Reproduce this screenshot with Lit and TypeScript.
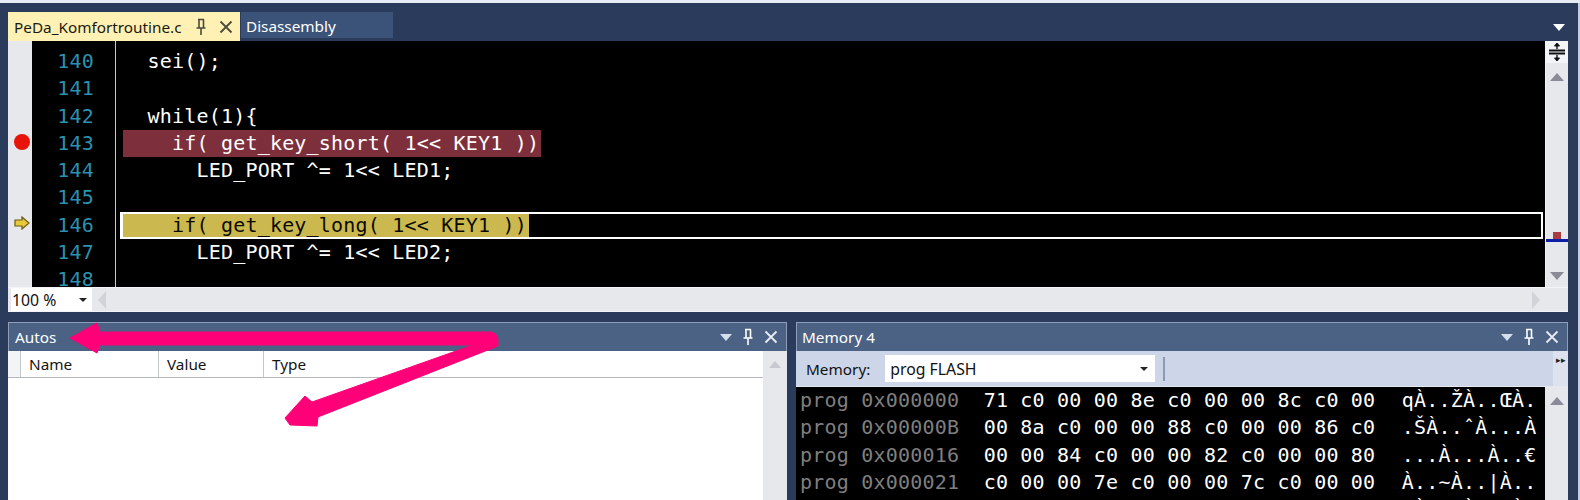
import { LitElement, html, css, svg } from "lit";
import { customElement } from "lit/decorators.js";

const pin = (c: string) => svg`<svg class="ic" width="12" height="18" viewBox="0 0 12 18" fill="none" stroke=${c} stroke-width="1.6"><path d="M3 1.5h6M4 1.5v8M8.5 1.5v8M1.5 10h9M6 10v7"/></svg>`;
const close = (c: string) => svg`<svg class="ic" width="14" height="14" viewBox="0 0 14 14" fill="none" stroke=${c} stroke-width="1.8"><path d="M1.5 1.5l11 11M12.5 1.5l-11 11"/></svg>`;
const drop = (c: string) => svg`<svg class="ic" width="12" height="7" viewBox="0 0 12 7"><path d="M0 0h12L6 7z" fill=${c}/></svg>`;
const dropSmall = svg`<svg class="ic" width="8" height="4" viewBox="0 0 8 4"><path d="M0 0h8L4 4z" fill="#222"/></svg>`;
const up = svg`<svg class="ic" width="14" height="8" viewBox="0 0 14 8"><path d="M7 0l7 8H0z" fill="#8a8a98"/></svg>`;
const upLight = svg`<svg class="ic" width="12" height="7" viewBox="0 0 12 7"><path d="M6 0l6 7H0z" fill="#c8c9d0"/></svg>`;
const down = svg`<svg class="ic" width="14" height="8" viewBox="0 0 14 8"><path d="M0 0h14L7 8z" fill="#8a8a98"/></svg>`;

interface Line { n: number; text: string; kind?: string; }
const lines: Line[] = [
  { n: 140, text: "  sei();" },
  { n: 141, text: "" },
  { n: 142, text: "  while(1){" },
  { n: 143, text: "    if( get_key_short( 1<< KEY1 ))", kind: "bp" },
  { n: 144, text: "      LED_PORT ^= 1<< LED1;" },
  { n: 145, text: "" },
  { n: 146, text: "    if( get_key_long( 1<< KEY1 ))", kind: "cur" },
  { n: 147, text: "      LED_PORT ^= 1<< LED2;" },
  { n: 148, text: "" },
];

const mem = [
  ["0x000000", "71 c0 00 00 8e c0 00 00 8c c0 00", "qÀ..ŽÀ..ŒÀ."],
  ["0x00000B", "00 8a c0 00 00 88 c0 00 00 86 c0", ".ŠÀ..ˆÀ...À"],
  ["0x000016", "00 00 84 c0 00 00 82 c0 00 00 80", "...À...À..€"],
  ["0x000021", "c0 00 00 7e c0 00 00 7c c0 00 00", "À..~À..|À.."],
  ["0x00002C", "7a c0 00 00 78 c0 00 00 76 c0 00", "zÀ..xÀ..vÀ."],
];

@customElement("app-root")
export class AppRoot extends LitElement {
  static styles = css`
    :host { display: block; width: 1580px; height: 500px; position: relative; overflow: hidden; background: #2a3b5b; font-family: "Noto Sans", sans-serif; font-size: 15.3px; }
    .ic { display: block; flex: none; }
    .strip { height: 3px; background: #e6ebf4; }
    .frame { height: 497px; display: flex; flex-direction: column; padding: 9px 10px 0 8px; box-sizing: border-box; border-right: 2px solid #c4cde0; }
    .tabs { height: 29px; display: flex; align-items: flex-start; flex: none; }
    .tab { display: flex; align-items: center; box-sizing: border-box; }
    .tab.active { width: 232px; height: 29px; background: #fff1b4; color: #1a1a10; padding: 1px 0 0 6px; }
    .tab.active .name { width: 181px; }
    .tab.active .x { margin-left: 12px; }
    .tab.other { width: 152px; height: 26px; margin-left: 1px; background: #3b5379; color: #fff; padding: 2px 0 0 5px; }
    .tabs .more { margin: 12px 3px 0 auto; }
    .editor { height: 246px; display: flex; flex: none; background: #000; }
    .margin { width: 24px; flex: none; background: #e7e8ec; padding: 5px 0 0 3px; box-sizing: border-box; }
    .mark { height: 27.3px; display: flex; align-items: center; justify-content: center; }
    .nums { width: 83px; flex: none; border-right: 1px solid #c9c9c9; overflow: hidden; padding-top: 7px; }
    .num { height: 27.3px; line-height: 27.3px; text-align: right; padding-right: 21px; color: #2b91af; }
    .mono { font-family: "DejaVu Sans Mono", monospace; font-size: 20px; letter-spacing: 0.2px; }
    .code { flex: 1; min-width: 0; padding: 7px 0 0 7px; overflow: hidden; color: #fff; }
    .line { height: 27.3px; line-height: 27.3px; box-sizing: border-box; display: flex; }
    .t { white-space: pre; }
    .line.bp .t { background: #7e2f3c; padding-right: 2px; }
    .line.cur { margin: 0 2px 0 -3px; border: 2px solid #fff; border-left-width: 3px; line-height: 23.3px; }
    .line.cur .t { background: #cbb94f; color: #0c0a00; padding-right: 2px; }
    .vs { width: 23px; flex: none; background: #e7e8ec; display: flex; flex-direction: column; align-items: center; position: relative; border-left: 1px solid #f4f4f6; box-sizing: border-box; }
    .split { width: 100%; height: 22px; background: #f3f4f8; display: flex; align-items: center; justify-content: center; }
    .vs .u { margin-top: 10px; }
    .vs .d { margin-top: auto; margin-bottom: 7px; }
    .tick { position: absolute; left: 0; right: 0; top: 198px; height: 3px; background: #0d1fa6; }
    .bpm { position: absolute; left: 7px; top: 191px; width: 8px; height: 8px; background: #a83d3f; }
    .hbar { height: 25px; flex: none; display: flex; align-items: center; background: #e7e8ec; border-bottom: 1px solid #f4f4f8; border-top: 1px solid #f4f4f8; box-sizing: border-box; }
    .zoom { width: 81px; height: 23px; margin-left: 3px; flex: none; background: #fff; display: flex; align-items: center; justify-content: space-between; padding: 0 5px 0 1px; box-sizing: border-box; color: #111; font-size: 15.8px; }
    .hbar .l { margin-left: 6px; }
    .hbar .r { margin: 0 28px 0 auto; }
    .tri { width: 0; height: 0; border-top: 9px solid transparent; border-bottom: 9px solid transparent; }
    .tri.left { border-right: 8px solid #d2d3d9; }
    .tri.right { border-left: 8px solid #d2d3d9; }
    .panels { flex: 1; min-height: 0; display: flex; gap: 9px; margin-top: 10px; }
    .panel { display: flex; flex-direction: column; overflow: hidden; background: #fff; box-sizing: border-box; }
    .panel.a { width: 779px; }
    .panel.b { width: 772px; }
    .panel.b .title { padding-left: 5px; }
    .title { height: 29px; flex: none; box-sizing: border-box; display: flex; align-items: center; background: #4b6285; border: 1px solid #8e9db8; border-bottom: none; color: #fff; padding: 0 8px 0 6px; }
    .title .sp { flex: 1; }
    .title .tools { display: flex; align-items: center; gap: 10px; }
    .body { flex: 1; display: flex; min-height: 0; }
    .list { flex: 1; min-width: 0; }
    .head { height: 27px; display: flex; align-items: center; border-bottom: 1px solid #b6b8c0; box-sizing: border-box; color: #141414; }
    .col { height: 100%; display: flex; align-items: center; padding-left: 8px; box-sizing: border-box; border-right: 1px solid #c4c6ce; }
    .c0 { width: 13px; padding: 0; background: #f3f4f6; }
    .c1 { width: 138px; }
    .c2 { width: 105px; }
    .type { padding-left: 8px; }
    .sb { width: 24px; flex: none; background: #e7e8ec; display: flex; justify-content: center; padding-top: 10px; box-sizing: border-box; }
    .sb.m { width: 23px; }
    .tb { height: 36px; flex: none; display: flex; align-items: center; background: #cdd6e9; border-bottom: 1px solid #e6e8f0; box-sizing: border-box; color: #111; padding-left: 10px; position: relative; }
    .combo { width: 270px; height: 27px; margin-left: 15px; background: #fff; display: flex; align-items: center; justify-content: space-between; box-sizing: border-box; padding: 0 7px 0 5px; font-size: 15.8px; }
    .vsep { width: 2px; height: 24px; margin-left: 8px; background: #8d99ae; }
    .over { position: absolute; right: 0; top: 0; bottom: 0; width: 15px; background: #dde2ee; font-size: 9px; letter-spacing: 0; color: #222; line-height: 18px; text-align: center; }
    .mem { flex: 1; min-width: 0; background: #000; color: #fff; padding-left: 4px; overflow: hidden; }
    .row { height: 27.3px; line-height: 27.3px; white-space: pre; }
    .row .g { color: #7f7f7f; }
    .row .asc { margin-left: 2px; }
    .arrows { position: absolute; left: 0; top: 0; pointer-events: none; }
  `;

  render() {
    return html`
      <div class="strip"></div>
      <div class="frame">
        <div class="tabs">
          <div class="tab active"><span class="name">PeDa_Komfortroutine.c</span>${pin("#4a4a3a")}<span class="x">${close("#4a4a3a")}</span></div>
          <div class="tab other">Disassembly</div>
          <span class="more">${drop("#fff")}</span>
        </div>
        <div class="editor">
          <div class="margin">
            ${lines.map((l) => html`<div class="mark">
              ${l.kind === "bp" ? svg`<svg width="18" height="18" viewBox="0 0 18 18"><circle cx="9" cy="9" r="8" fill="#e81409"/></svg>` : ""}
              ${l.kind === "cur" ? svg`<svg width="16" height="14" viewBox="0 0 16 14"><path d="M1 4h7V1l7 6-7 6v-3H1z" fill="#e8c93c" stroke="#6b5a10" stroke-width="1.2"/></svg>` : ""}
            </div>`)}
          </div>
          <div class="nums mono">${lines.map((l) => html`<div class="num">${l.n}</div>`)}</div>
          <div class="code mono">
            ${lines.map((l) => html`<div class="line ${l.kind ?? ""}"><span class="t">${l.text}</span></div>`)}
          </div>
          <div class="vs">
            <div class="split"><svg width="18" height="20" viewBox="0 0 18 20" fill="none" stroke="#111"><path d="M1 8.5h16M1 11.5h16" stroke-width="2"/><path d="M9 2v5M9 13v5" stroke-width="1.4"/><path d="M6.5 4L9 1l2.5 3zM6.5 16L9 19l2.5-3z" fill="#111"/></svg></div>
            <span class="u">${up}</span>
            <span class="d">${down}</span>
            <div class="bpm"></div>
            <div class="tick"></div>
          </div>
        </div>
        <div class="hbar">
          <div class="zoom"><span>100 %</span>${dropSmall}</div>
          <div class="tri left l"></div>
          <div class="tri right r"></div>
        </div>
        <div class="panels">
          <div class="panel a">
            <div class="title"><span>Autos</span><span class="sp"></span>
              <span class="tools">${drop("#d6deec")}${pin("#fff")}${close("#e8edf5")}</span></div>
            <div class="body">
              <div class="list">
                <div class="head">
                  <div class="col c0"></div><div class="col c1">Name</div><div class="col c2">Value</div><div class="type">Type</div>
                </div>
              </div>
              <div class="sb">${upLight}</div>
            </div>
          </div>
          <div class="panel b">
            <div class="title"><span>Memory 4</span><span class="sp"></span>
              <span class="tools">${drop("#d6deec")}${pin("#fff")}${close("#e8edf5")}</span></div>
            <div class="tb"><span>Memory:</span>
              <div class="combo"><span>prog FLASH</span>${dropSmall}</div>
              <div class="vsep"></div><span class="over">▸▸</span></div>
            <div class="body">
              <div class="mem mono">
                ${mem.map((m) => html`<div class="row"><span class="g">prog ${m[0]}</span>  ${m[1]}  <span class="asc">${m[2]}</span></div>`)}
              </div>
              <div class="sb m">${up}</div>
            </div>
          </div>
        </div>
      </div>
      <svg class="arrows" width="1580" height="500" viewBox="0 0 1580 500">
        <path d="M100 332L491 332Q498 334 498 340L498 346L318 417L317 426L290 425L285 418L305 396L312 402L473 345L100 345L97 353L70 338L97 323z" fill="#ff0078" stroke="#ff0078" stroke-width="1" stroke-linejoin="round"/>
      </svg>
    `;
  }
}
